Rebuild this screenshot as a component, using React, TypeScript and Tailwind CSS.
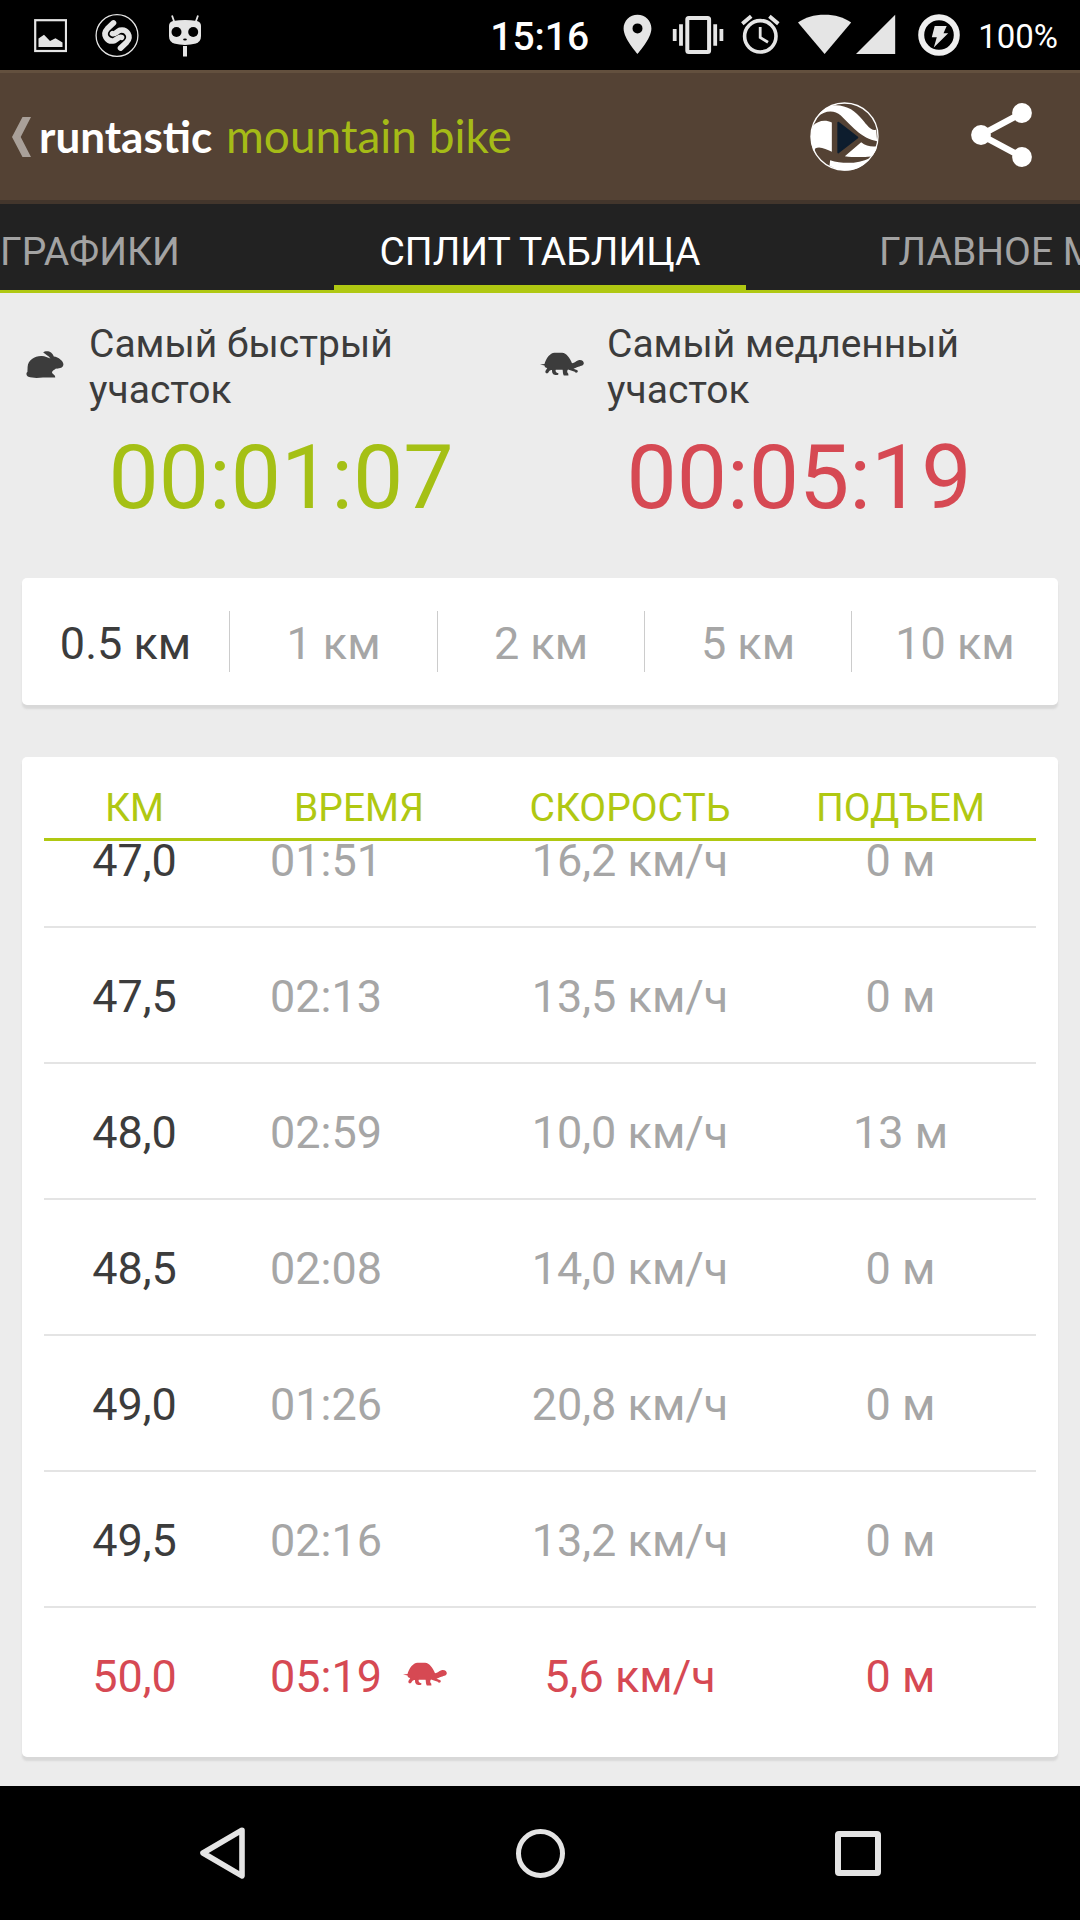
import React from "react";

type Split = { km: string; time: string; speed: string; climb: string; slowest?: boolean };

const splits: Split[] = [
  { km: "47,0", time: "01:51", speed: "16,2 км/ч", climb: "0 м" },
  { km: "47,5", time: "02:13", speed: "13,5 км/ч", climb: "0 м" },
  { km: "48,0", time: "02:59", speed: "10,0 км/ч", climb: "13 м" },
  { km: "48,5", time: "02:08", speed: "14,0 км/ч", climb: "0 м" },
  { km: "49,0", time: "01:26", speed: "20,8 км/ч", climb: "0 м" },
  { km: "49,5", time: "02:16", speed: "13,2 км/ч", climb: "0 м" },
  { km: "50,0", time: "05:19", speed: "5,6 км/ч", climb: "0 м", slowest: true },
];

const intervals = ["0.5 км", "1 км", "2 км", "5 км", "10 км"];

function Turtle({ className = "" }: { className?: string }) {
  return (
    <svg viewBox="0 0 44 24" className={`h-[24px] w-[44px] shrink-0 ${className}`} fill="currentColor">
      <path d="M0 12.6 L4.5 12 C6 6.5 10 1 14.5 .8 H22 C26.5 1.2 30 6 32 11.2 C35 11 35.5 8.8 38.5 8.2 C42 7.6 44 9.5 43.8 11.5 C43.4 14 40 14 37.5 15 C36 15.8 34.5 16.4 33.5 16.8 L37.5 18.2 L37.8 20 C36 21.3 35.5 20.6 34.8 19.8 L28 17.6 C26.8 19 27 20.5 28.3 21.8 L28.4 23.4 H23.8 C22.6 21.5 23 19.5 22.6 17.8 H15.8 C15 19.2 16 20.8 18.3 21.2 C19 23 17.5 23 15.6 23 C12.5 22.8 12 20.5 12 18 C10.5 17.6 9.8 18.4 8.8 19.8 C8 21.4 6.6 22 5.4 20.6 C4.8 18.5 7 17.4 7.2 16 C5.5 15.8 4.6 15 4.5 13.4 Z" />
    </svg>
  );
}

function Rabbit() {
  return (
    <svg viewBox="0 0 38 27" className="ml-[4px] h-[27px] w-[38px] shrink-0" fill="currentColor">
      <path d="M1.6 16 C2 9 8.5 5 15 5 C18.5 4.6 21.5 6.6 24.4 7.4 C22.4 4.8 19.5 3.5 17.2 1.6 C18.5 0 22.8 -.2 25 1.6 C27 3.4 27.4 4.6 27.8 5.6 C32.5 6 37.6 10.5 37.4 13.6 C37.2 17 33 17.8 30 17.6 C28.6 18.8 26 20 26 21.6 C26.2 23.4 29.4 23.6 29.2 26.6 H17 C12 27 6 27.2 2.4 25.8 C0 25 0 21.5 1.4 21 Z" />
    </svg>
  );
}

function StatusBar() {
  return (
    <div className="flex h-[70px] shrink-0 items-start bg-black pl-[34px] pr-[22px] text-[#e5e5e5]">
      <svg viewBox="34 14 33 42" className="mt-[14px] h-[42px] w-[33px]">
        <rect x="35.2" y="20.2" width="30.8" height="30.8" fill="none" stroke="currentColor" strokeWidth="2.2" />
        <path d="M38.5 47 V38.5 L44 34.8 L50 41 L55.5 38.3 L62.5 42.5 V47 Z" fill="currentColor" />
      </svg>
      <svg viewBox="95.5 13 44 45" className="ml-[28px] mt-[13px] h-[45px] w-[44px]" fill="none" stroke="currentColor">
        <circle cx="117.5" cy="35.5" r="20.9" strokeWidth="1.3" />
        <path d="M114 22.9 L107.8 28.8 C102.5 34.5 107.5 42.2 114.5 40.8 C117.6 39.6 119.8 36.2 122 37.4" strokeWidth="5.6" strokeLinecap="round" />
        <path d="M121 48.1 L127.2 42.2 C132.5 36.5 127.5 28.8 120.5 30.2 C117.4 31.4 115.2 34.8 113 33.6" strokeWidth="5.6" strokeLinecap="round" />
      </svg>
      <svg viewBox="168 14 34 43" className="ml-[29px] mt-[14px] h-[43px] w-[34px]">
        <path d="M172 15.5 L174.3 22 M198 15.5 L195.7 22" stroke="currentColor" strokeWidth="1.8" />
        <path d="M173 21 Q185 19 197 21 Q201 22 201 26 V36 Q201 41.5 196 43.5 Q185 46.3 174 43.5 Q169 41.5 169 36 V26 Q169 22 173 21Z" fill="currentColor" />
        <circle cx="176.5" cy="32" r="5" fill="#000" />
        <circle cx="193.2" cy="32" r="5" fill="#000" />
        <ellipse cx="185" cy="39.5" rx="1.9" ry="1" fill="#000" />
        <rect x="183" y="46" width="4" height="10.5" fill="currentColor" />
      </svg>
      <span className="ml-auto mt-[15px] text-[39px] font-medium leading-[44px] text-white">15:16</span>
      <svg viewBox="623 14 29 41" className="ml-[34px] mt-[14px] h-[41px] w-[29px]">
        <path fillRule="evenodd" fill="currentColor" d="M637.5 14.8 C629.7 14.8 623.6 21 623.6 28.6 C623.6 38.8 637.5 54 637.5 54 S651.4 38.8 651.4 28.6 C651.4 21 645.3 14.8 637.5 14.8Z M637.5 23.4 a5 5 0 1 1 0 10 a5 5 0 1 1 0 -10Z" />
      </svg>
      <svg viewBox="672 14 52 42" className="ml-[20px] mt-[14px] h-[42px] w-[52px]">
        <rect x="687.3" y="18" width="21.8" height="34" rx="1.5" fill="none" stroke="currentColor" strokeWidth="4" />
        <path d="M674.7 29 V41 M681 24.3 V45.7 M715.2 24.3 V45.7 M721.4 29 V41" stroke="currentColor" strokeWidth="3.8" />
      </svg>
      <svg viewBox="740 14 40 41" className="ml-[16px] mt-[14px] h-[41px] w-[40px]" fill="none" stroke="currentColor">
        <circle cx="760.3" cy="36.3" r="15.7" strokeWidth="3.6" />
        <path d="M760.2 27 V37.5 L768 42.3" strokeWidth="2.8" />
        <path d="M742.3 23.8 L751.2 16.2 M778.3 23.8 L769.4 16.2" strokeWidth="3.8" />
      </svg>
      <svg viewBox="798 14 98 41" className="ml-[18px] mt-[14px] h-[41px] w-[98px]" fill="currentColor">
        <path d="M824.6 54 L798 22.6 C805 17.4 814 14.8 824.6 14.8 C835 14.8 844 17.4 851.2 22.6 Z" />
        <path d="M856 54 L895.2 14.8 V54 Z" />
      </svg>
      <svg viewBox="917 13 44 44" className="ml-[21px] mt-[13px] h-[44px] w-[44px]">
        <circle cx="939" cy="35" r="17.8" fill="none" stroke="#efefef" strokeWidth="6" />
        <path d="M934.7 26 H946.7 L943.5 33.2 H948.2 L933.8 47.6 L936.8 37.2 H931.8 Z" fill="currentColor" />
      </svg>
      <span className="ml-[17px] mt-[17px] text-[33px] leading-[39px] text-white">100%</span>
    </div>
  );
}

function Roundel() {
  return (
    <svg viewBox="91.5 97.5 207 207" className="h-[69px] w-[69px]">
      <circle cx="195" cy="201" r="100.5" fill="none" stroke="#fff" strokeWidth="4" />
      <g fill="#fff">
        <path d="M94 200 L99 170 C114 154 136 149 157 159 V247 C140 239 123 230 108 236 C104 240 106 248 108 253 C98 236 93 218 94 200Z" />
        <path d="M112 143 C126 120 148 108 168 107 C205 108 228 124 249 151 C263 168 277 187 290 180 L293 215 C268 212 252 199 238 190 C220 174 200 155 184 138 C164 120 136 122 112 143Z" />
        <path d="M245 218 C259 229 276 233 293 230 C290 244 283 254 274 261 C247 264 218 263 196 260Z" />
        <path d="M152 272 C190 284 236 283 271 266 C251 294 224 303 195 303 C177 303 163 297 150 289Z" />
      </g>
      <path d="M176 159 L234 204 L176 249 Z" fill="#0d1d2e" stroke="#0d1d2e" strokeWidth="5" strokeLinejoin="round" />
    </svg>
  );
}

function AppBar() {
  return (
    <header className="flex h-[134px] shrink-0 items-center border-b-4 border-t-[3px] border-b-[#43362c] border-t-[#63503e] bg-[#544234] pl-[12px] pr-[47px]">
      <svg viewBox="0 0 19 40" className="h-[40px] w-[19px]">
        <path d="M10.5 0 H19 L8.7 20 L19 40 H10.5 L0 20 Z" fill="#a9a099" />
      </svg>
      <div className="ml-[8px] flex items-baseline whitespace-nowrap pb-[2px] font-['Lato',sans-serif] leading-[56px]">
        <span className="w-[187px] text-[44px] font-bold text-white">runtastic</span>
        <span className="text-[46px] text-[#a5bb17]">mountain bike</span>
      </div>
      <div className="ml-auto flex items-center gap-[91px]">
        <Roundel />
        <svg viewBox="970 103 63 66" className="mb-[3px] h-[66px] w-[63px]">
          <path d="M1022 114 L981 136 L1022 158" fill="none" stroke="#fff" strokeWidth="6.4" />
          <g fill="#fff">
            <circle cx="1022" cy="114" r="9.9" />
            <circle cx="981" cy="136" r="9.9" />
            <circle cx="1022" cy="158" r="9.9" />
          </g>
        </svg>
      </div>
    </header>
  );
}

function Tabs() {
  return (
    <nav className="flex h-[89px] shrink-0 justify-between overflow-hidden whitespace-nowrap border-b-[3px] border-[#b0c812] bg-[#222222] text-[39px] leading-[97px] text-[#a3a3a3]">
      <span className="w-[334px]">ГРАФИКИ</span>
      <span className="h-[86px] w-[412px] border-b-[5px] border-[#b0c812] text-center text-white">СПЛИТ ТАБЛИЦА</span>
      <span className="w-[334px] pl-[133px]">ГЛАВНОЕ М</span>
    </nav>
  );
}

function Extreme({ icon, label, time, color }: { icon: React.ReactNode; label: string; time: string; color: string }) {
  return (
    <div className="w-[518px]">
      <div className="flex items-start text-[#3c3c3c]">
        <div className="flex h-[86px] w-[67px] items-center">{icon}</div>
        <p className="w-[380px] text-[39px] leading-[46px]">{label}</p>
      </div>
      <p className={`mt-[12px] text-center text-[89.5px] leading-[105px] ${color}`}>{time}</p>
    </div>
  );
}

const columns = "grid grid-cols-[181px_268px_274px_267px]";

export default function App() {
  return (
    <div className="flex h-[1920px] w-[1080px] flex-col overflow-hidden bg-[#ececec] font-['Roboto',sans-serif]">
      <StatusBar />
      <AppBar />
      <Tabs />
      <main className="flex grow flex-col px-[22px]">
        <section className="flex h-[285px] pt-[28px]">
          <Extreme icon={<Rabbit />} label="Самый быстрый участок" time="00:01:07" color="text-[#a5c015]" />
          <Extreme icon={<Turtle />} label="Самый медленный участок" time="00:05:19" color="text-[#d64953]" />
        </section>

        <section className="grid h-[127px] grid-cols-[208px_208px_207px_207px_206px] items-center rounded-[5px] bg-white shadow-[0_4px_2px_#d8d8d8]">
          {intervals.map((label, i) => (
            <div
              key={label}
              className={`h-[61px] border-[#cccccc] pt-px text-center text-[45px] leading-[64px] ${i < 4 ? "border-r" : ""} ${i === 0 ? "text-[#3c3c3c]" : "text-[#a6a6a6]"}`}
            >
              {label}
            </div>
          ))}
        </section>

        <section className="mt-[52px] h-[1000px] rounded-[5px] bg-white px-[22px] shadow-[0_4px_2px_#d8d8d8]">
          <div className={`${columns} h-[84px] border-b-[3px] border-[#b0c812] pt-[28px] text-center text-[39px] leading-[46px] text-[#b0c812]`}>
            <span>КМ</span>
            <span>ВРЕМЯ</span>
            <span>СКОРОСТЬ</span>
            <span>ПОДЪЕМ</span>
          </div>
          <div className="flex h-[901px] flex-col justify-end overflow-hidden">
            {splits.map((s) => (
              <div
                key={s.km}
                className={`${columns} shrink-0 pt-[3px] text-center text-[45px] leading-[131px] ${s.slowest ? "h-[134px] text-[#d64953]" : "h-[136px] border-b-2 border-[#e4e4e4] text-[#a6a6a6]"}`}
              >
                <span className={s.slowest ? "" : "text-[#3c3c3c]"}>{s.km}</span>
                <span className="flex items-center pl-[45px]">
                  {s.time}
                  {s.slowest && <Turtle className="ml-[21px] mt-[-6px]" />}
                </span>
                <span>{s.speed}</span>
                <span>{s.climb}</span>
              </div>
            ))}
          </div>
        </section>
      </main>

      <footer className="flex h-[134px] shrink-0 items-center bg-black pl-[199px]">
        <svg viewBox="0 0 48 54" className="h-[54px] w-[48px]">
          <path d="M43 4.2 L4 27 L43 49.8 Z" fill="none" stroke="#e4e4e4" strokeWidth="5.6" strokeLinejoin="round" />
        </svg>
        <div className="ml-[269px] h-[49px] w-[49px] rounded-full border-[5.6px] border-[#e4e4e4]" />
        <div className="ml-[270px] h-[45px] w-[46px] rounded-[4px] border-[6px] border-[#e4e4e4]" />
      </footer>
    </div>
  );
}
